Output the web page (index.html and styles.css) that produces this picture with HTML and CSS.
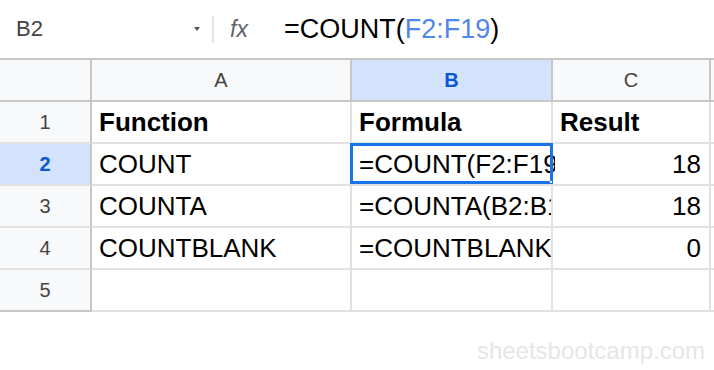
FILE: index.html
```html
<!DOCTYPE html>
<html lang="en">
<head>
  <meta charset="UTF-8" />
  <title>COUNT functions</title>
  <link rel="stylesheet" href="styles.css">
</head>
<body>
  <div class="formula-bar">
    <div class="name-box">
      <span class="cell-ref">B2</span>
      <span class="caret"></span>
    </div>
    <div class="fx">fx</div>
    <div class="formula">=COUNT(<span class="range">F2:F19</span>)</div>
  </div>

  <div class="sheet">
    <div class="row head-row">
      <div class="rh corner"></div>
      <div class="ch col-a">A</div>
      <div class="ch col-b active">B</div>
      <div class="ch col-c">C</div>
      <div class="ch col-d"></div>
    </div>
    <div class="row">
      <div class="rh">1</div>
      <div class="cell col-a bold">Function</div>
      <div class="cell col-b bold">Formula</div>
      <div class="cell col-c bold">Result</div>
      <div class="cell col-d"></div>
    </div>
    <div class="row">
      <div class="rh active">2</div>
      <div class="cell col-a">COUNT</div>
      <div class="cell col-b selected">=COUNT(F2:F19)</div>
      <div class="cell col-c num">18</div>
      <div class="cell col-d"></div>
    </div>
    <div class="row">
      <div class="rh">3</div>
      <div class="cell col-a">COUNTA</div>
      <div class="cell col-b">=COUNTA(B2:B19)</div>
      <div class="cell col-c num">18</div>
      <div class="cell col-d"></div>
    </div>
    <div class="row">
      <div class="rh">4</div>
      <div class="cell col-a">COUNTBLANK</div>
      <div class="cell col-b">=COUNTBLANK(B2:B19)</div>
      <div class="cell col-c num">0</div>
      <div class="cell col-d"></div>
    </div>
    <div class="row">
      <div class="rh">5</div>
      <div class="cell col-a"></div>
      <div class="cell col-b"></div>
      <div class="cell col-c"></div>
      <div class="cell col-d"></div>
    </div>
  </div>

  <div class="watermark">sheetsbootcamp.com</div>
</body>
</html>
```

FILE: styles.css
```css
body {
  margin: 0;
  font-family: 'Liberation Sans', Arial, sans-serif;
  background: white;
  color: #000;
  width: 714px;
  overflow: hidden;
}

/* --- formula bar --- */
.formula-bar {
  height: 58px;
  display: flex;
  align-items: center;
}
.name-box {
  width: 212px;
  display: flex;
  align-items: center;
  border-right: 2px solid #e3e3e3;
  height: 27px;
}
.cell-ref {
  font-size: 22px;
  color: #444;
  padding-left: 16px;
  flex: 1;
}
.caret {
  width: 0;
  height: 0;
  border-left: 3px solid transparent;
  border-right: 3px solid transparent;
  border-top: 4px solid #555;
  margin-right: 12px;
}
.fx {
  font-size: 23px;
  font-style: italic;
  color: #5f6368;
  margin-left: 16px;
  width: 54px;
}
.formula {
  font-size: 27px;
  color: #000;
}
.range {
  color: #5186ec;
}

/* --- grid --- */
.sheet {
  border-top: 2px solid #c7c7c7;
}
.row {
  display: flex;
  height: 42px;
}
.rh, .ch, .cell {
  box-sizing: border-box;
  height: 42px;
  flex-shrink: 0;
  display: flex;
  align-items: center;
  overflow: hidden;
  white-space: nowrap;
}
.rh {
  width: 92px;
  justify-content: center;
  background: #f8f9fa;
  color: #444;
  font-size: 20px;
  border-right: 2px solid #c7c7c7;
  border-bottom: 2px solid #e1e1e1;
}
.row:last-child .rh,
.head-row .rh {
  border-bottom-color: #c7c7c7;
}
.ch {
  justify-content: center;
  background: #f8f9fa;
  color: #444;
  font-size: 20px;
  border-right: 2px solid #c7c7c7;
  border-bottom: 2px solid #c7c7c7;
}
.rh.active, .ch.active {
  background: #d3e3fd;
  color: #0b57d0;
  font-weight: bold;
}
.cell {
  font-size: 26px;
  padding: 0 7px;
  border-right: 2px solid #e1e1e1;
  border-bottom: 2px solid #e1e1e1;
}
.col-a { width: 260px; }
.col-b { width: 201px; }
.col-c { width: 158px; }
.col-d { flex: 1 1 0; padding: 0; border-right: none; }
.bold { font-weight: bold; }
.num { justify-content: flex-end; padding-right: 8px; }

.cell.selected {
  position: relative;
  overflow: visible;
  clip-path: inset(-2px -2px -2px -2px);
}
.cell.selected::before {
  content: '';
  position: absolute;
  left: -2px;
  top: -1px;
  right: -2px;
  bottom: 0;
  border: 3px solid #1a73e8;
  pointer-events: none;
  z-index: 1;
}
.cell.selected::after {
  content: '';
  position: absolute;
  right: -1px;
  bottom: 1px;
  width: 2px;
  height: 2px;
  background: white;
  z-index: 2;
}

.watermark {
  margin-top: 25px;
  text-align: right;
  padding-right: 9px;
  font-size: 24px;
  line-height: 28px;
  color: #e6e6e6;
}
```
